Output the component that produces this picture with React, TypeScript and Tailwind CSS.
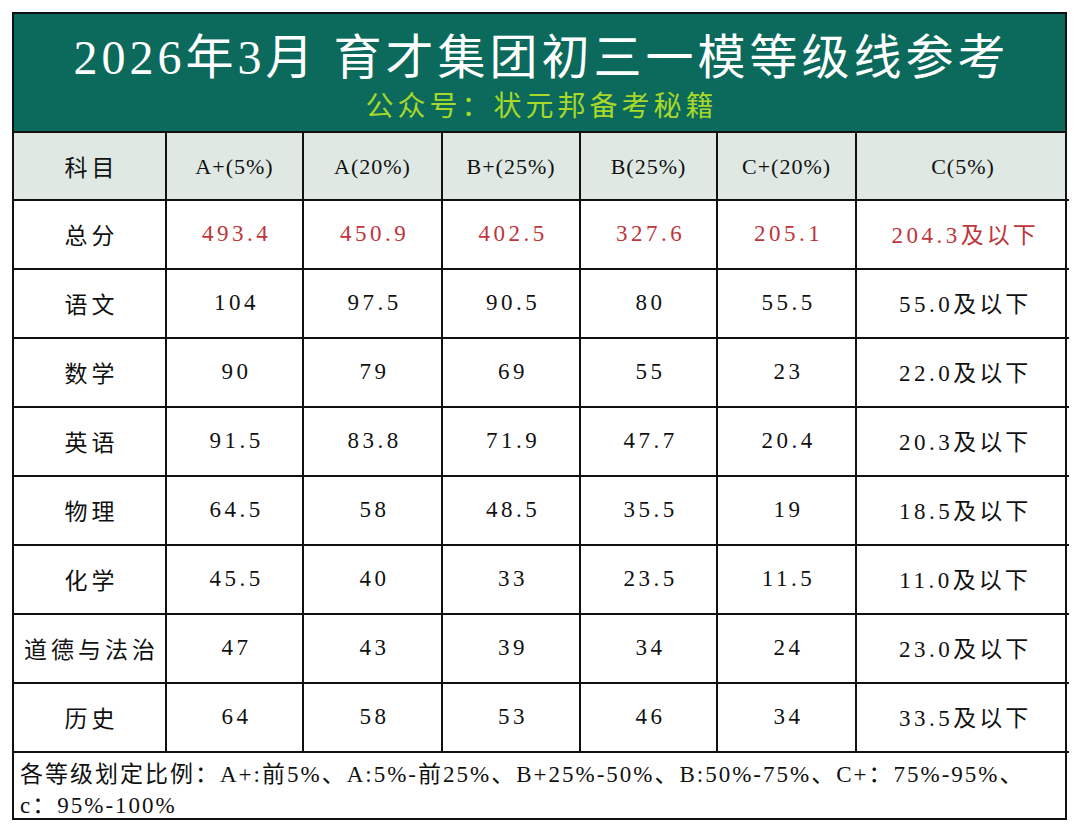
import React from 'react';

const cols = ['科目', 'A+(5%)', 'A(20%)', 'B+(25%)', 'B(25%)', 'C+(20%)', 'C(5%)'];

const rows: { name: string; vals: string[]; red?: boolean }[] = [
  { name: '总分', vals: ['493.4', '450.9', '402.5', '327.6', '205.1', '204.3及以下'], red: true },
  { name: '语文', vals: ['104', '97.5', '90.5', '80', '55.5', '55.0及以下'] },
  { name: '数学', vals: ['90', '79', '69', '55', '23', '22.0及以下'] },
  { name: '英语', vals: ['91.5', '83.8', '71.9', '47.7', '20.4', '20.3及以下'] },
  { name: '物理', vals: ['64.5', '58', '48.5', '35.5', '19', '18.5及以下'] },
  { name: '化学', vals: ['45.5', '40', '33', '23.5', '11.5', '11.0及以下'] },
  { name: '道德与法治', vals: ['47', '43', '39', '34', '24', '23.0及以下'] },
  { name: '历史', vals: ['64', '58', '53', '46', '34', '33.5及以下'] },
];

const serif = "font-['Liberation_Serif','Noto_Sans_CJK_SC',serif]";
const cjk = "font-['Noto_Sans_CJK_SC',sans-serif]";

function Val({ text }: { text: string }) {
  const m = text.match(/^([\d.]+)(.*)$/);
  const num = m ? m[1] : text;
  const rest = m ? m[2] : '';
  return (
    <span className="whitespace-nowrap">
      <span className={`${serif} text-[23px] tracking-[3.5px]`}>{num}</span>
      {rest && <span className={`${cjk} text-[23px] tracking-[3px]`}>{rest}</span>}
    </span>
  );
}

export default function App() {
  const grid = 'grid grid-cols-[153px_137px_139px_138px_137px_139px_212px]';
  return (
    <div className="w-[1080px] h-[834px] bg-white pt-[12px] pl-[12px] text-[#111]">
      <div className="w-[1055px] border-2 border-[#111]">
        <div className="h-[119px] bg-[#0b6a5b] flex flex-col items-center border-b-2 border-[#111]">
          <div className="mt-[16px] text-white text-[48px] leading-[56px] tracking-[4px] font-['Liberation_Serif','Noto_Sans_CJK_SC',serif] pl-[4px]">
            2026年3月 育才集团初三一模等级线参考
          </div>
          <div className={`${cjk} mt-[1px] text-[#a7d82a] text-[28px] leading-[34px] tracking-[4px] pl-[4px]`}>
            公众号：状元邦备考秘籍
          </div>
        </div>

        <div className={`${grid} h-[68px] bg-[#dfe8e3]`}>
          {cols.map((c, i) => (
            <div
              key={c}
              className={`flex items-center justify-center border-b-2 border-[#111] ${i < 6 ? 'border-r-2' : ''}`}
            >
              {i === 0 ? (
                <span className={`${cjk} text-[23px] tracking-[4px] pl-[4px]`}>{c}</span>
              ) : (
                <span className={`${serif} text-[22px] tracking-[1px]`}>{c}</span>
              )}
            </div>
          ))}
        </div>

        {rows.map((r) => (
          <div key={r.name} className={`${grid} h-[69px]`}>
            <div className={`${cjk} flex items-center justify-center text-[23px] tracking-[4px] pl-[4px] border-r-2 border-b-2 border-[#111] whitespace-nowrap`}>
              {r.name}
            </div>
            {r.vals.map((v, i) => (
              <div
                key={i}
                className={`flex items-center justify-center pl-[4px] border-b-2 border-[#111] ${i < 5 ? 'border-r-2' : ''} ${r.red ? 'text-[#c0343c]' : ''}`}
              >
                <Val text={v} />
              </div>
            ))}
          </div>
        ))}

        <div className={`${cjk} h-[65px] px-[6px] pt-[5px] text-[23px] leading-[28px] tracking-[2px] whitespace-nowrap`}>
          <div>
            各等级划定比例：<span className={serif}>A+:</span>前<span className={serif}>5%</span>、<span className={serif}>A:5%-</span>前<span className={serif}>25%</span>、<span className={serif}>B+25%-50%</span>、<span className={serif}>B:50%-75%</span>、<span className={serif}>C+</span>：<span className={serif}>75%-95%</span>、
          </div>
          <div>
            <span className={serif}>c</span>：<span className={serif}>95%-100%</span>
          </div>
        </div>
      </div>
    </div>
  );
}
